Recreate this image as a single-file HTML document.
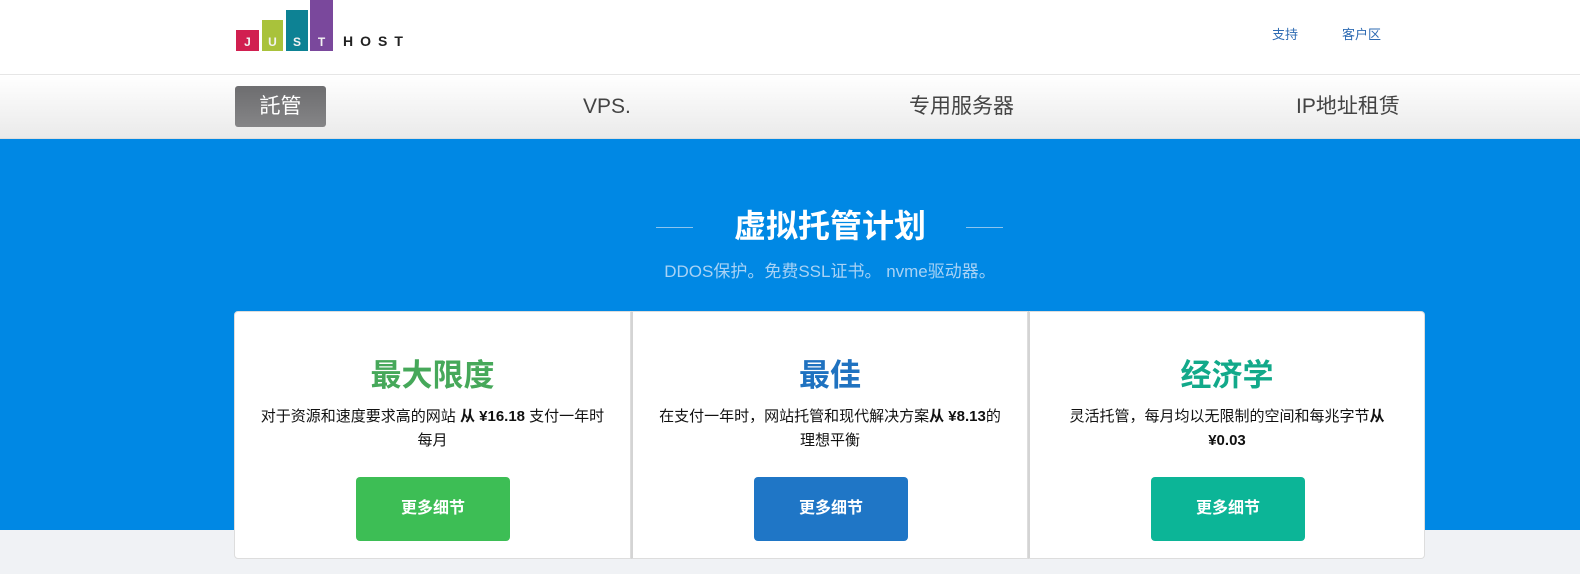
<!DOCTYPE html>
<html><head><meta charset="utf-8"><style>
*{margin:0;padding:0;box-sizing:border-box}
body{width:1580px;height:574px;overflow:hidden;background:#f0f2f5;font-family:"Liberation Sans","Noto Sans CJK SC",sans-serif;position:relative}
.hdr{position:absolute;top:0;left:0;width:1580px;height:75px;background:#fff;border-bottom:1px solid #e6e6e6}
.sq{position:absolute;color:#f3f3f3;font-size:12px;font-weight:bold;text-align:center}
.sq span{position:absolute;bottom:2px;left:0;right:0}
.nav{position:absolute;top:75px;left:0;width:1580px;height:64px;background:linear-gradient(#fff,#eaeaea);border-bottom:1px solid #ddd}
.nav div{position:absolute;top:17px;font-size:21px;color:#444;line-height:30px;height:30px}
.blue{position:absolute;top:139px;left:0;width:1580px;height:391px;background:#0088e4}
.card{position:absolute;top:311px;height:248px;width:397px;background:#fff;text-align:center}
.card h2{margin-top:38px;font-size:31px;font-weight:bold}
.card p{margin-top:10px;font-size:15px;line-height:24px;color:#111;padding:0 23px}
.btn{position:absolute;left:121px;top:165px;width:154px;height:64px;border-radius:4px;color:#fff;font-weight:bold;font-size:16px;line-height:64px}
</style></head><body>
<div class="hdr">
<div class="sq" style="left:236px;top:30px;width:23px;height:21px;background:#d11f50"><span>J</span></div>
<div class="sq" style="left:262px;top:20px;width:21px;height:31px;background:#a9c23b"><span>U</span></div>
<div class="sq" style="left:286px;top:10px;width:22px;height:41px;background:#0d8294"><span>S</span></div>
<div class="sq" style="left:310px;top:0;width:23px;height:51px;background:#7a489c"><span>T</span></div>
<div style="position:absolute;left:343px;top:33px;font-size:14px;font-weight:bold;letter-spacing:7px;color:#222">HOST</div>
<div style="position:absolute;left:1272px;top:24px;font-size:13px;color:#2e6bb3">支持</div>
<div style="position:absolute;left:1342px;top:24px;font-size:13px;color:#2e6bb3">客户区</div>
</div>
<div class="nav">
<div style="left:235px;top:11px;width:91px;height:41px;background:linear-gradient(#6d6d6f,#858587);border-radius:3px;color:#fff;text-align:center;line-height:41px">託管</div>
<div style="left:583px">VPS.</div>
<div style="left:909px">专用服务器</div>
<div style="left:1296px">IP地址租赁</div>
</div>
<div class="blue">
<div style="position:absolute;left:656px;top:88px;width:37px;height:1px;background:#8cc4ee"></div>
<div style="position:absolute;left:966px;top:88px;width:37px;height:1px;background:#8cc4ee"></div>
<div style="position:absolute;left:0;width:1660px;top:62px;text-align:center;font-size:32px;font-weight:bold;color:#fff">虚拟托管计划</div>
<div style="position:absolute;left:0;width:1660px;top:118px;text-align:center;font-size:17px;color:#a8d2f5">DDOS保护。免费SSL证书。 nvme驱动器。</div>
</div>
<div class="card" style="left:234px;border:1px solid #ddd;border-radius:4px 0 0 4px"><h2 style="color:#46a85a">最大限度</h2><p style="padding:0 10px">对于资源和速度要求高的网站 <b>从 ¥16.18</b> 支付一年时<br>每月</p><div class="btn" style="background:#3dbe55">更多细节</div></div>
<div class="card" style="left:631px;border:1px solid #ddd;border-left:2px solid #d4d4d4"><h2 style="color:#1f72c0">最佳</h2><p style="padding:0 10px">在支付一年时，网站托管和现代解决方案<b>从 ¥8.13</b>的<br>理想平衡</p><div class="btn" style="background:#1f76c6">更多细节</div></div>
<div class="card" style="left:1028px;border:1px solid #ddd;border-left:2px solid #d4d4d4;border-radius:0 4px 4px 0"><h2 style="color:#12a98a">经济学</h2><p style="padding:0 20px">灵活托管，每月均以无限制的空间和每兆字节<b>从<br>¥0.03</b></p><div class="btn" style="background:#0cb597">更多细节</div></div>
</body></html>
